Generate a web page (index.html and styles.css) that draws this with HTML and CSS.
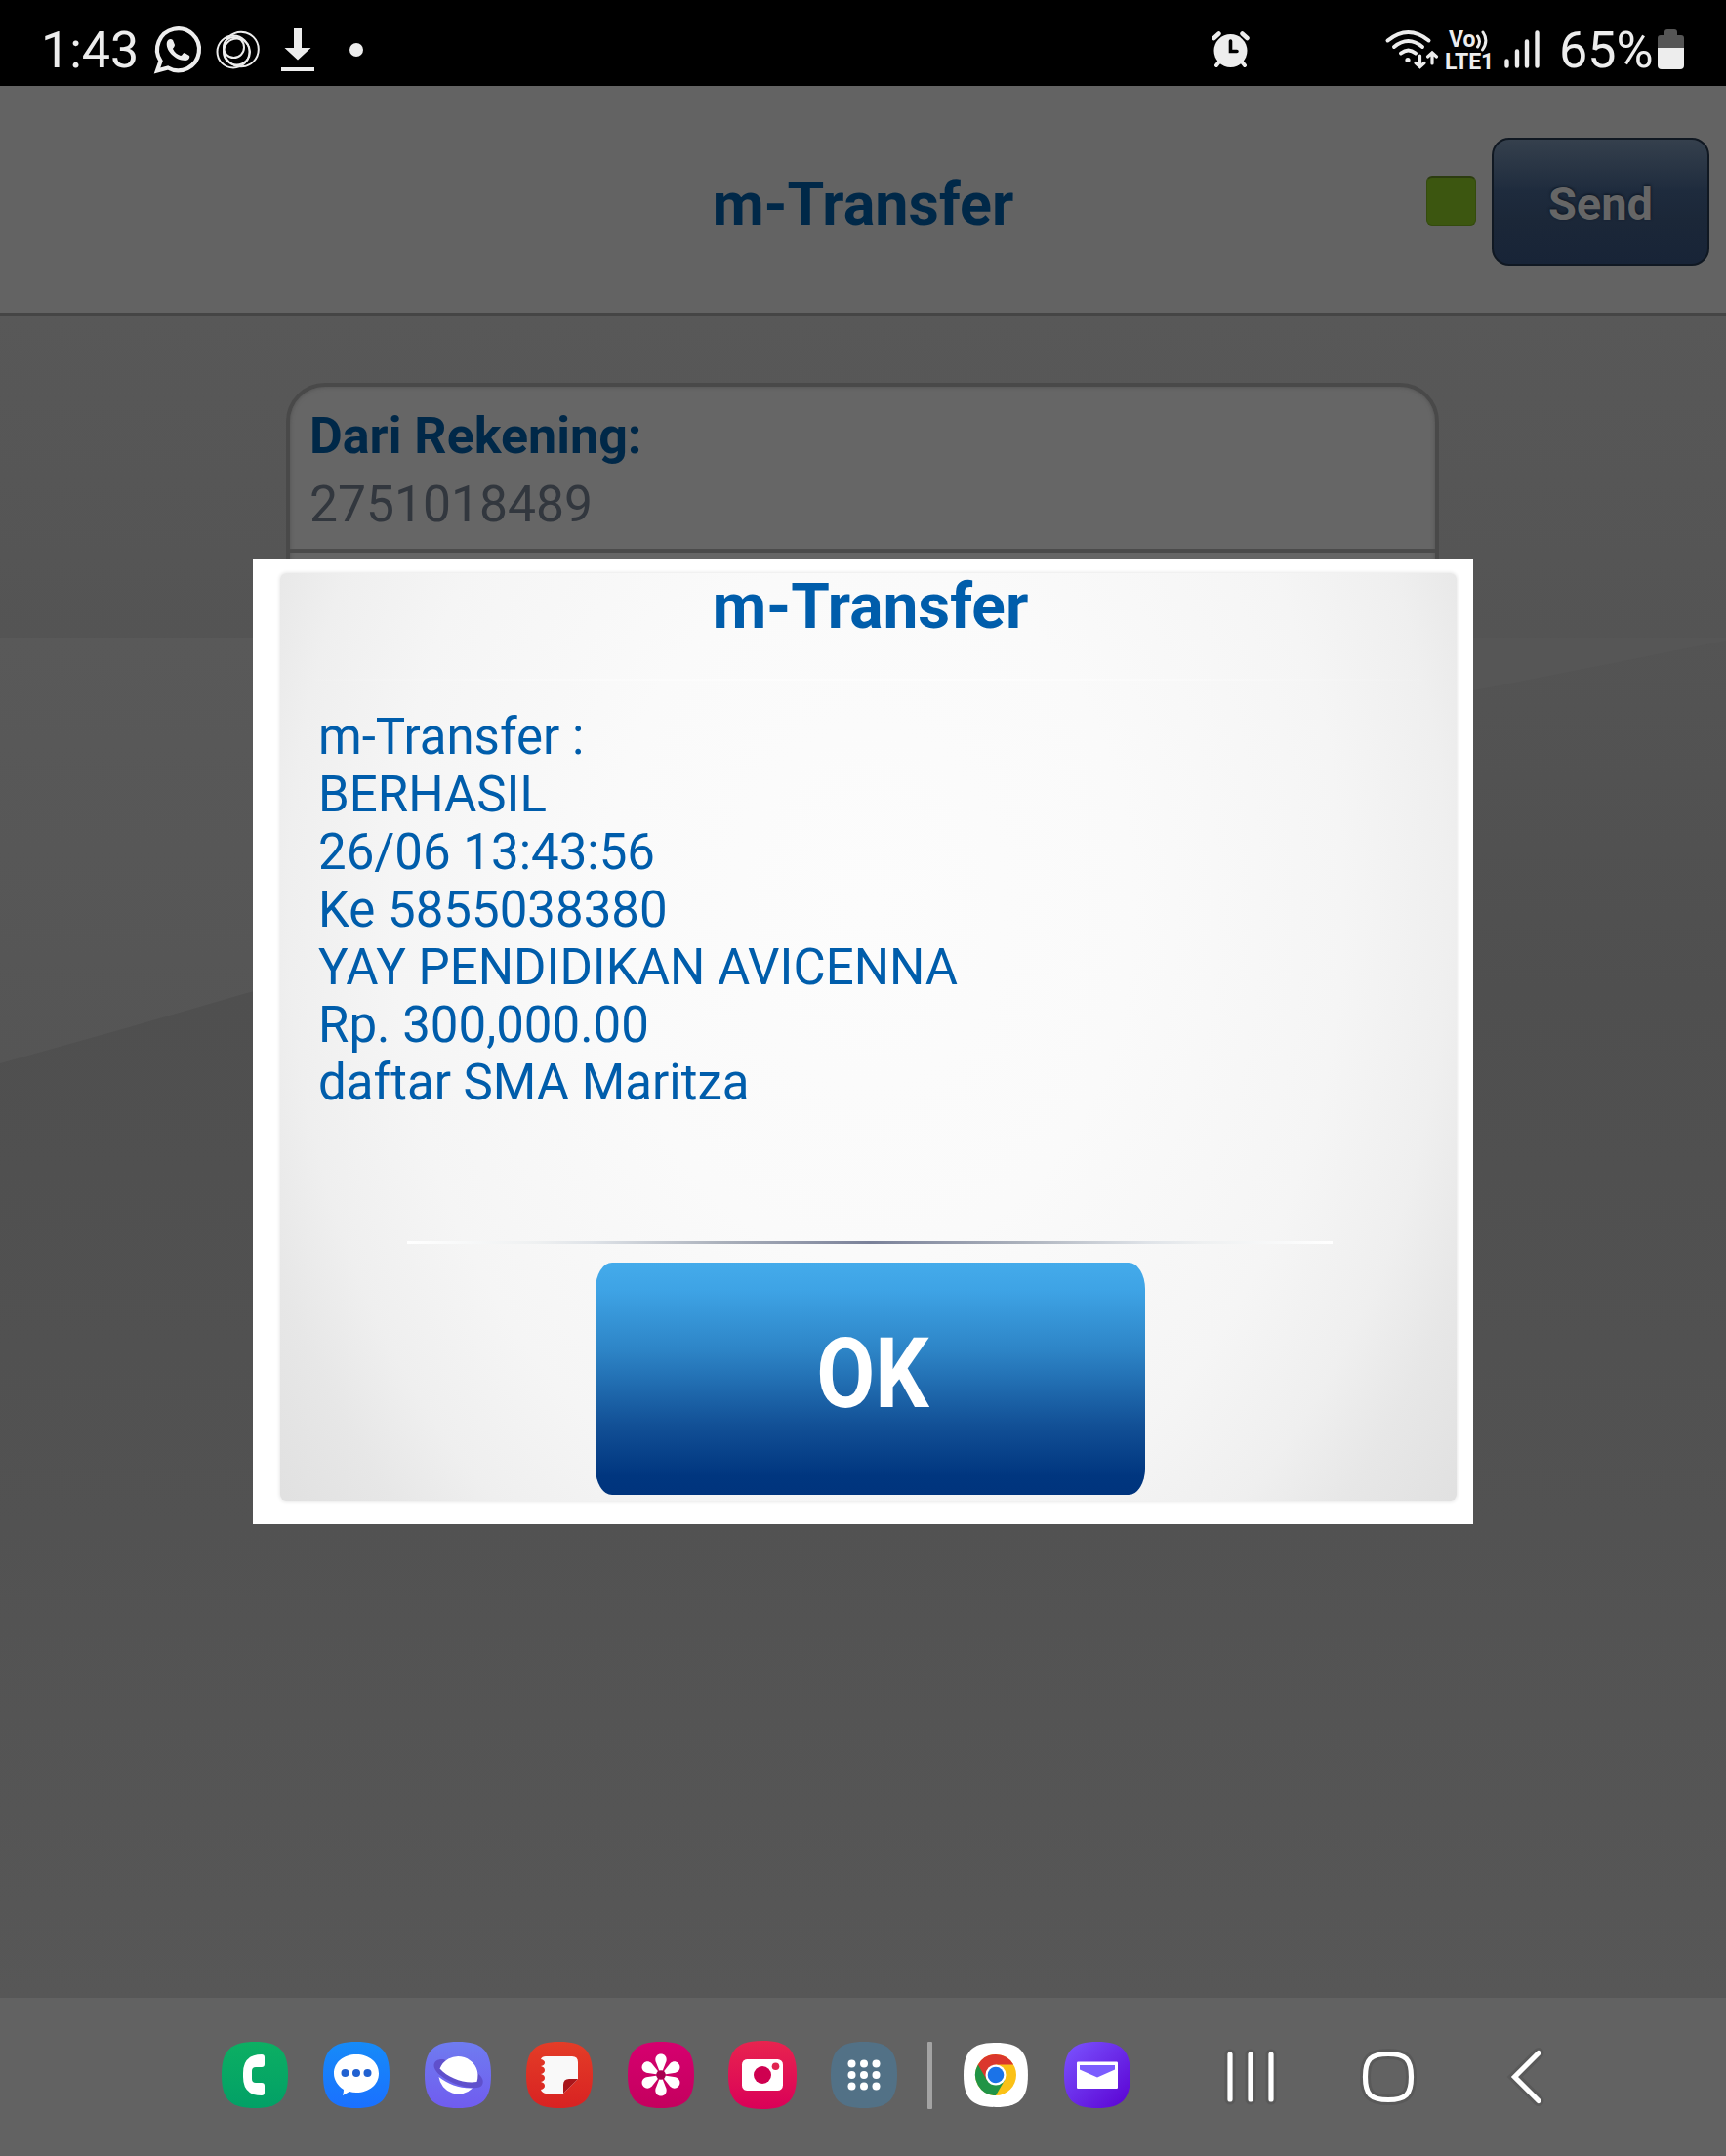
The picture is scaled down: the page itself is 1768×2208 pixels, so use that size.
FILE: index.html
```html
<!DOCTYPE html>
<html lang="id">
<head>
<meta charset="utf-8">
<title>m-Transfer</title>
<link rel="stylesheet" href="styles.css">
</head>
<body>
<div class="screen">
  <div class="status">
    <span class="clock">1:43</span>
    <svg class="status-left" width="240" height="88" viewBox="150 0 240 88" fill="none" stroke="#ededed">
      <path d="M164.500 62.500A21.500 21.500 0 1 1 172 69.500L161 72.500Z" stroke-width="4.200"/>
      <path d="M171 43c1-3 4-4 6-2l2 5c0 2-2 3-2 4 2 4 5 6 8 7 2 0 2-3 4-3l5 3c1 2-1 5-4 5-11 0-21-11-19-19z" fill="#ededed" stroke="none"/>
      <g stroke-width="2">
        <circle cx="247" cy="50.500" r="17.800"/><circle cx="239" cy="53" r="16.500"/><circle cx="242.500" cy="53" r="13.500" /><circle cx="239.500" cy="48.500" r="10.500"/>
      </g>
      <path d="M301 29h8v20h9.500L305 61.500 291.500 49h9.500zM288 69h34v4h-34z" fill="#ededed" stroke="none"/>
      <circle cx="365" cy="51" r="7" fill="#ededed" stroke="none"/>
    </svg>
    <svg class="status-alarm" width="44" height="88" viewBox="1238 0 44 88" fill="none" stroke="#ededed" stroke-linecap="round">
      <circle cx="1260.500" cy="52" r="17" fill="#ededed" stroke="none"/>
      <path d="M1243.500 39l5-4.500M1277.500 39l-5-4.500" stroke-width="4.500"/>
      <path d="M1246 67l4-5M1275 67l-4-5" stroke-width="4"/>
      <path d="M1260.500 42v10.500h6.500" stroke="#000" stroke-width="3.600"/>
    </svg>
    <svg class="status-right" width="170" height="88" viewBox="1415 0 170 88" fill="none" stroke="#ededed" stroke-linecap="round">
      <path d="M1421.500 41.500q21-17 42 0M1428 48q14.500-12 29 0M1435 54.500q7.500-6 15 0" stroke-width="4"/>
      <circle cx="1442" cy="61.500" r="2.600" fill="#ededed" stroke="none"/>
      <path d="M1454.500 57v11M1450 64.500l4.500 4 4.500-4M1467 65v-11M1462.500 58l4.500-4 4.500 4" stroke-width="3.200"/>
      <text class="lte" fill="#ededed" stroke="none"><tspan x="1484" y="48">Vo</tspan><tspan x="1480" y="70.500">LTE1</tspan></text>
      <path d="M1513.500 37q4 5.500 0 11M1519 33q6 8.500-.5 18" stroke-width="3"/>
      <path d="M1543.500 68.500v5M1554 58.500v15M1564 48.500v25M1574.500 39.500v34" stroke-width="4.400" transform="translate(0 -6)"/>
    </svg>
    <span class="percent">65%</span>
    <svg class="battery" width="27" height="88" viewBox="0 0 27 88"><path d="M0 50V39q0-3 3-3h4v-3q0-3 3-3h7q3 0 3 3v3h4q3 0 3 3v11z" fill="#555"/><path d="M0 49h27v18q0 4-4 4H4q-4 0-4-4z" fill="#ededed"/></svg>
  </div>

  <div class="header">
    <h1 class="title">m-Transfer</h1>
    <div class="actions"><i class="led"></i><button class="send">Send</button></div>
  </div>

  <div class="content">
    <svg class="swoosh" viewBox="0 324 1768 1722" width="1768" height="1722">
      <defs>
        <linearGradient id="wave" x1="0" y1="653" x2="0" y2="1090" gradientUnits="userSpaceOnUse"><stop offset="0" stop-color="#595959"/><stop offset="1" stop-color="#555"/></linearGradient>
      </defs>
      <path d="M0 653H300V1003Q150 1048 0 1089Z" fill="url(#wave)"/>
      <path d="M1480 653H1768V656Q1660 678 1480 713Z" fill="#565656"/>
    </svg>
    <div class="card">
      <div class="row"><div class="label">Dari Rekening:</div><div class="value">2751018489</div></div>
    </div>
    <div class="dialog">
      <div class="panel">
        <h2 class="dialog-title">m-Transfer</h2>
        <div class="message">m-Transfer :<br>BERHASIL<br>26/06 13:43:56<br>Ke 5855038380<br>YAY PENDIDIKAN AVICENNA<br>Rp. 300,000.00<br>daftar SMA Maritza</div>
        <div class="rule"></div>
        <button class="ok"><span>OK</span></button>
      </div>
    </div>
  </div>

  <div class="dock">
    <svg width="1768" height="162" viewBox="0 2046 1768 162">
      <defs>
        <path id="tile" d="M34 0C59 0 68 9 68 34S59 68 34 68 0 59 0 34 9 0 34 0Z"/>
        <linearGradient id="g1" x2="0" y2="1"><stop stop-color="#0caf63"/><stop offset="1" stop-color="#02a066"/></linearGradient>
        <linearGradient id="g2" x2="0" y2="1"><stop stop-color="#168bf8"/><stop offset="1" stop-color="#1a70ff"/></linearGradient>
        <linearGradient id="g3" x2="0" y2="1"><stop stop-color="#6f7cf0"/><stop offset="1" stop-color="#705cef"/></linearGradient>
        <linearGradient id="g4" x2="0" y2="1"><stop stop-color="#e43d27"/><stop offset="1" stop-color="#d82222"/></linearGradient>
        <linearGradient id="g5" x2="0" y2="1"><stop stop-color="#d6006f"/><stop offset="1" stop-color="#c4005e"/></linearGradient>
        <linearGradient id="g6" x2="0" y2="1"><stop stop-color="#e8244f"/><stop offset="1" stop-color="#da0058"/></linearGradient>
        <linearGradient id="g7" x2="1" y2="1"><stop stop-color="#7b55ff"/><stop offset="1" stop-color="#5a00d2"/></linearGradient>
      </defs>
      <g transform="translate(227 2091)"><use href="#tile" fill="url(#g1)"/><path d="M44 16v7q0 3-3 3h-6q-4 0-4 4v8q0 4 4 4h6q3 0 3 3v7q0 3-3 3-19 0-19-19v-4q0-19 19-19 3 0 3 3z" fill="#fff"/></g>
      <g transform="translate(331 2091)"><use href="#tile" fill="url(#g2)"/><path d="M34 13c13 0 23 8 23 19.500S47 52 34 52q-4 0-7-1l-7 4q1-3 1-6c-6-4-10-10-10-16.500C11 21 21 13 34 13z" fill="#fff"/><g fill="#2161d1"><circle cx="22.500" cy="32" r="4"/><circle cx="34" cy="32" r="4"/><circle cx="45.500" cy="32" r="4"/></g></g>
      <g transform="translate(435 2091)"><use href="#tile" fill="url(#g3)"/><path d="M19 18C9 17 5 26 17 35c14 11 39 16 42 9 2-4 0-8-5-12z" fill="#5f50cc"/><path d="M15.500 27.500A20.300 20.300 0 0 1 54.500 33.500Q54.500 38 53.500 41C40 43 24 37 15.500 27.500Z" fill="#fff"/><path d="M14.500 36C24 43.500 36 48 49 47.500A20.300 20.300 0 0 1 14.500 36Z" fill="#fff"/></g>
      <g transform="translate(539 2091)"><use href="#tile" fill="url(#g4)"/><path d="M20 15h27q6 0 6 6v17L38 53H20q-4-1-5-4 4-1 4-4t-4-4q4-1 4-4t-4-4q4-1 4-4t-4-4q4-1 4-3.500T15 18q1-3 5-3z" fill="#f9f9f9"/><path d="M53 38L38 53V44q0-6 6-6z" fill="#a9151a"/></g>
      <g transform="translate(643 2091)"><use href="#tile" fill="url(#g5)"/><g fill="#fff"><path id="petal" d="M34 34l-5.500-14c-2-10 13-10 11 0z"/><use href="#petal" transform="rotate(60 34 34)"/><use href="#petal" transform="rotate(120 34 34)"/><use href="#petal" transform="rotate(180 34 34)"/><use href="#petal" transform="rotate(240 34 34)"/><use href="#petal" transform="rotate(300 34 34)"/></g><circle cx="34" cy="34" r="4.800" fill="#a80050"/></g>
      <g transform="translate(747 2091)"><use href="#tile" fill="url(#g6)" transform="translate(-1 -1) scale(1.030)"/><rect x="13" y="18" width="42" height="32" rx="5.500" fill="#fff"/><circle cx="34" cy="34" r="9" fill="#cf0050"/><circle cx="47.500" cy="25.300" r="3.800" fill="#e0244f"/></g>
      <g transform="translate(851 2091)"><use href="#tile" fill="#527186"/><g fill="#fff"><circle cx="21.500" cy="22.500" r="4"/><circle cx="34" cy="22.500" r="4"/><circle cx="46.500" cy="22.500" r="4"/><circle cx="21.500" cy="34" r="4"/><circle cx="34" cy="34" r="4"/><circle cx="46.500" cy="34" r="4"/><circle cx="21.500" cy="45.500" r="4"/><circle cx="34" cy="45.500" r="4"/><circle cx="46.500" cy="45.500" r="4"/></g></g>
      <rect x="950" y="2091" width="5" height="69" rx="1" fill="#a3a3a3"/>
      <g transform="translate(986 2091)"><use href="#tile" fill="#fff" transform="translate(1 1) scale(.970)"/><circle cx="34" cy="34" r="21" fill="#fbc116"/><path d="M15.800 23.500A21 21 0 0 0 34 55L43.100 39.300 34 34z" fill="#219446"/><path d="M15.800 23.500A21 21 0 0 1 52.200 23.500H34V34L24.900 39.300z" fill="#db372c"/><circle cx="34" cy="34" r="10.500" fill="#fff"/><circle cx="34" cy="34" r="8.300" fill="#1b73e8"/></g>
      <g transform="translate(1090 2091)"><use href="#tile" fill="url(#g7)"/><rect x="13" y="20.500" width="42" height="27.500" rx="1.200" fill="#fff"/><path d="M16 24h36v4.500L34 36.500 16 28.500z" fill="#7b5cff"/></g>
      <g fill="none" stroke-linecap="round" stroke-linejoin="miter">
        <g stroke="#595959" stroke-width="11"><path d="M1260 2104v46M1281 2104v46M1302 2104v46"/><path d="M1422 2103.500C1440 2103.500 1445.500 2109 1445.500 2127S1440 2150.500 1422 2150.500 1398.500 2145 1398.500 2127 1404 2103.500 1422 2103.500Z"/><path d="M1576 2102.500L1551.500 2127 1576 2151.500"/></g>
        <g stroke="#fff" stroke-width="5.200"><path d="M1260 2104v46M1281 2104v46M1302 2104v46"/><path d="M1422 2103.500C1440 2103.500 1445.500 2109 1445.500 2127S1440 2150.500 1422 2150.500 1398.500 2145 1398.500 2127 1404 2103.500 1422 2103.500Z"/><path d="M1576 2102.500L1551.500 2127 1576 2151.500"/></g>
      </g>
    </svg>
  </div>
</div>
</body>
</html>
```
FILE: styles.css
```css
* { box-sizing: border-box; }
body { margin: 0; font-family: Roboto, sans-serif; background: #545454; }
h1, h2 { margin: 0; font-weight: 700; }
svg { display: block; flex: none; }
button { border: 0; padding: 0; font-family: inherit; }

.screen { width: 1768px; height: 2208px; display: flex; flex-direction: column; overflow: hidden; }

.status { height: 88px; background: #000; color: #ededed; display: flex; align-items: center; flex: none; }
.clock, .percent { font-size: 52px; line-height: 88px; padding-top: 15px; height: 102px; }
.clock { width: 108px; margin-left: 42px; }
.status-alarm { margin-left: 848px; }
.status-right { margin-left: 133px; }
.lte { font: 700 23px Roboto, sans-serif; }
.percent { width: 102px; margin-left: 12px; white-space: nowrap; }
.battery { margin-left: -1px; }

.header { height: 236px; flex: none; background: #636363; border-bottom: 3px solid #454545; display: grid; grid-template-columns: 1fr auto 1fr; align-items: center; }
.title { grid-column: 2; font-size: 61px; line-height: 72px; color: #002848; margin-top: 8px; }
.actions { justify-self: end; display: flex; align-items: center; gap: 16px; margin-right: 17px; margin-top: 4px; }
.led { width: 51px; height: 51px; border-radius: 6px; background: #3c5610; border: 1px solid #344b0d; border-top: 2px solid #2c3c10; margin-top: -2px; }
.send { width: 223px; height: 131px; border: 2px solid #101822; border-radius: 18px; background: linear-gradient(#35404d, #1e2b3d 42%, #1b2738 65%, #182437); color: #666; font-size: 47px; font-weight: 700; padding-top: 3px; text-shadow: 0 -1px 3px #0b1420; }

.content { display: flow-root; flex: none; height: 1722px; position: relative; background: linear-gradient(#585858 0, #545454 19%, #4f4f4f 40%, #525252 72%, #575757 100%); }
.swoosh { position: absolute; inset: 0; }
.card { position: relative; width: 1181px; height: 300px; margin: 68px 0 0 293px; border: 4px solid #494949; border-radius: 40px 40px 0 0; background: #666; box-shadow: inset 0 0 4px #505050; }
.row { height: 170px; padding: 16px 20px 0; border-bottom: 4px solid #4b4b4b; }
.label { font-size: 52px; line-height: 70px; font-weight: 700; color: #002848; }
.value { font-size: 51.600px; line-height: 70px; color: #32373e; }

.dialog { position: absolute; left: 259px; top: 248px; width: 1250px; height: 989px; background: #fff; padding: 15px 17px 24px 28px; }
.panel { height: 950px; border-radius: 6px; box-shadow: 0 0 4px #ddd; display: flex; flex-direction: column; align-items: center; background: linear-gradient(90deg, #fff0, #fff8, #fff0) 0 108px / 100% 2px no-repeat, radial-gradient(ellipse 900px 1200px at 50% 36%, #fcfcfc 0, #fafafa 30%, #f5f5f5 54%, #efefef 66%, #e7e7e7 74%, #dedede 88%); }
.dialog-title { height: 109px; padding: 1px 0 0 4px; font-size: 64px; line-height: 68px; color: #005dab; }
.message { align-self: stretch; padding: 29px 39px 0; height: 575px; font-size: 51px; line-height: 59px; color: #005dab; }
.rule { width: 948px; height: 3px; margin-left: 2px; background: linear-gradient(90deg, #fff, #eef0f1 14%, #dfe3e8 20%, #aab0bb 34%, #7a8199 50%, #aab0bb 66%, #dfe3e8 80%, #eef0f1 86%, #fff); }
.ok { width: 563px; height: 238px; margin: 19px 0 0 3px; padding: 0 0 11px 5px; border-radius: 17px / 27px; background: linear-gradient(#44abeb, #3ea3e5 12%, #2d84c6 38%, #125096 70%, #00367f 92%, #00347d); color: #fff; font-size: 100px; font-weight: 700; }
.ok span { display: block; transform: scaleX(.87); }

.dock { height: 162px; flex: none; background: #626262; }
```
